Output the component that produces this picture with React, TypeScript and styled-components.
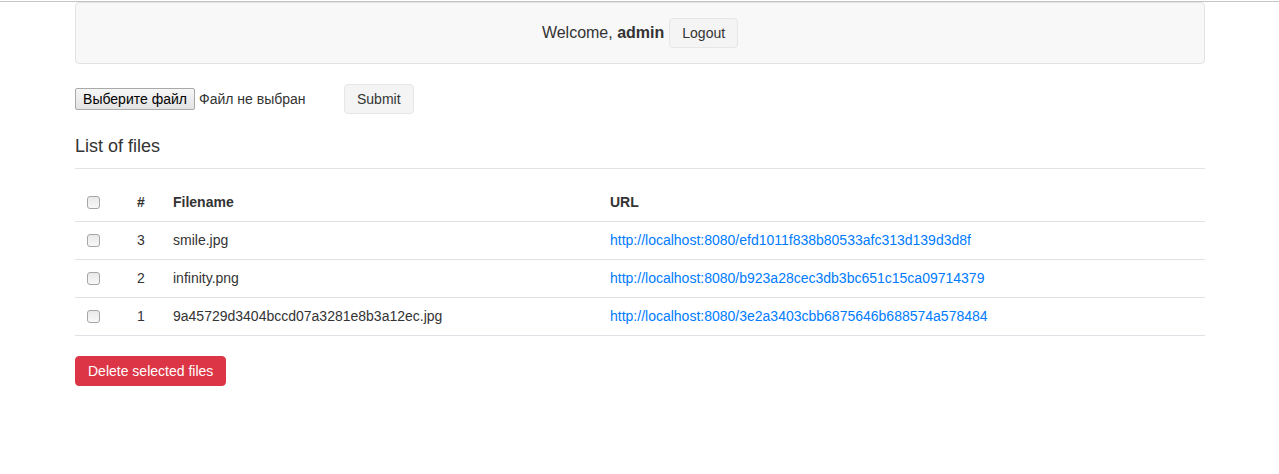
import React from "react";
import styled, { createGlobalStyle } from "styled-components";

const GlobalStyle = createGlobalStyle`
  *, *::before, *::after { box-sizing: border-box; }
  html, body { margin: 0; padding: 0; background: #fff; }
  body {
    font-family: "Liberation Sans", Arial, Helvetica, sans-serif;
    font-size: 14px;
    line-height: 20px;
    color: #333;
  }
`;

const TopRule = styled.div`
  height: 1px;
  margin-top: 1px;
  background: #c4c4c4;
`;

const Container = styled.div`
  width: 1130px;
  margin: 0 74px 0 75px;
`;

const HeaderPanel = styled.div`
  height: 62px;
  background: #f8f8f8;
  border: 1px solid #e3e3e3;
  border-radius: 4px;
  display: flex;
  align-items: center;
  justify-content: center;
  gap: 5px;
  font-size: 16px;
`;

const Greeting = styled.span`
  color: #333;
  b { font-weight: bold; }
`;

const Button = styled.button<{ $variant?: "light" | "danger" }>`
  font-family: inherit;
  font-size: 14px;
  line-height: 18px;
  padding: 5px 12px;
  border-radius: 4px;
  cursor: pointer;
  border: 1px solid ${(p) => (p.$variant === "danger" ? "#dc3545" : "#e6e6e6")};
  background: ${(p) => (p.$variant === "danger" ? "#dc3545" : "#f4f4f4")};
  color: ${(p) => (p.$variant === "danger" ? "#fff" : "#333")};
`;

const UploadForm = styled.form`
  display: flex;
  align-items: center;
  margin-top: 20px;
`;

const FilePicker = styled.div`
  width: 269px;
  display: flex;
  align-items: center;
  gap: 4px;
`;

const FileButton = styled.span`
  display: inline-flex;
  align-items: center;
  justify-content: center;
  width: 120px;
  height: 22px;
  border: 1px solid #a9a9a9;
  border-radius: 2px;
  background: linear-gradient(#f6f6f6, #e3e3e3);
  color: #000;
  font-size: 14px;
`;

const FileName = styled.span`
  color: #333;
  font-size: 14px;
`;

const SectionTitle = styled.h4`
  margin: 22px 0 0;
  font-size: 18px;
  font-weight: normal;
  line-height: 20px;
  color: #333;
`;

const Rule = styled.hr`
  margin: 12px 0 15px;
  border: 0;
  border-top: 1px solid #e2e2e2;
`;

const Table = styled.table`
  width: 100%;
  border-collapse: collapse;
  table-layout: fixed;
  margin-bottom: 20px;
`;

const Th = styled.th`
  text-align: left;
  font-weight: bold;
  padding: 8px;
  line-height: 21px;
  border-bottom: 1px solid #dee2e6;
  vertical-align: middle;
`;

const Td = styled.td`
  padding: 8px;
  line-height: 21px;
  border-bottom: 1px solid #dee2e6;
  vertical-align: middle;
`;

const CheckCell = styled(Td)`
  padding-left: 12px;
`;

const CheckHead = styled(Th)`
  padding-left: 12px;
`;

const Check = styled.input.attrs({ type: "checkbox" })`
  appearance: none;
  -webkit-appearance: none;
  display: block;
  width: 13px;
  height: 13px;
  margin: 0;
  border: 1px solid #a6a6a6;
  border-radius: 3px;
  background: linear-gradient(#e9e9e9, #f8f8f8);
`;

const Link = styled.a`
  color: #007bff;
  text-decoration: none;
`;

const files = [
  { id: 3, name: "smile.jpg", url: "http://localhost:8080/efd1011f838b80533afc313d139d3d8f" },
  { id: 2, name: "infinity.png", url: "http://localhost:8080/b923a28cec3db3bc651c15ca09714379" },
  { id: 1, name: "9a45729d3404bccd07a3281e8b3a12ec.jpg", url: "http://localhost:8080/3e2a3403cbb6875646b688574a578484" },
];

export default function App() {
  return (
    <>
      <GlobalStyle />
      <TopRule />
      <Container>
        <HeaderPanel>
          <Greeting>
            Welcome, <b>admin</b>
          </Greeting>
          <Button type="button">Logout</Button>
        </HeaderPanel>

        <UploadForm onSubmit={(e) => e.preventDefault()}>
          <FilePicker>
            <FileButton>Выберите файл</FileButton>
            <FileName>Файл не выбран</FileName>
          </FilePicker>
          <Button type="submit">Submit</Button>
        </UploadForm>

        <SectionTitle>List of files</SectionTitle>
        <Rule />

        <Table>
          <colgroup>
            <col style={{ width: 54 }} />
            <col style={{ width: 36 }} />
            <col style={{ width: 437 }} />
            <col />
          </colgroup>
          <thead>
            <tr>
              <CheckHead>
                <Check />
              </CheckHead>
              <Th>#</Th>
              <Th>Filename</Th>
              <Th>URL</Th>
            </tr>
          </thead>
          <tbody>
            {files.map((f) => (
              <tr key={f.id}>
                <CheckCell>
                  <Check />
                </CheckCell>
                <Td>{f.id}</Td>
                <Td>{f.name}</Td>
                <Td>
                  <Link href={f.url}>{f.url}</Link>
                </Td>
              </tr>
            ))}
          </tbody>
        </Table>

        <Button type="button" $variant="danger">
          Delete selected files
        </Button>
      </Container>
    </>
  );
}
